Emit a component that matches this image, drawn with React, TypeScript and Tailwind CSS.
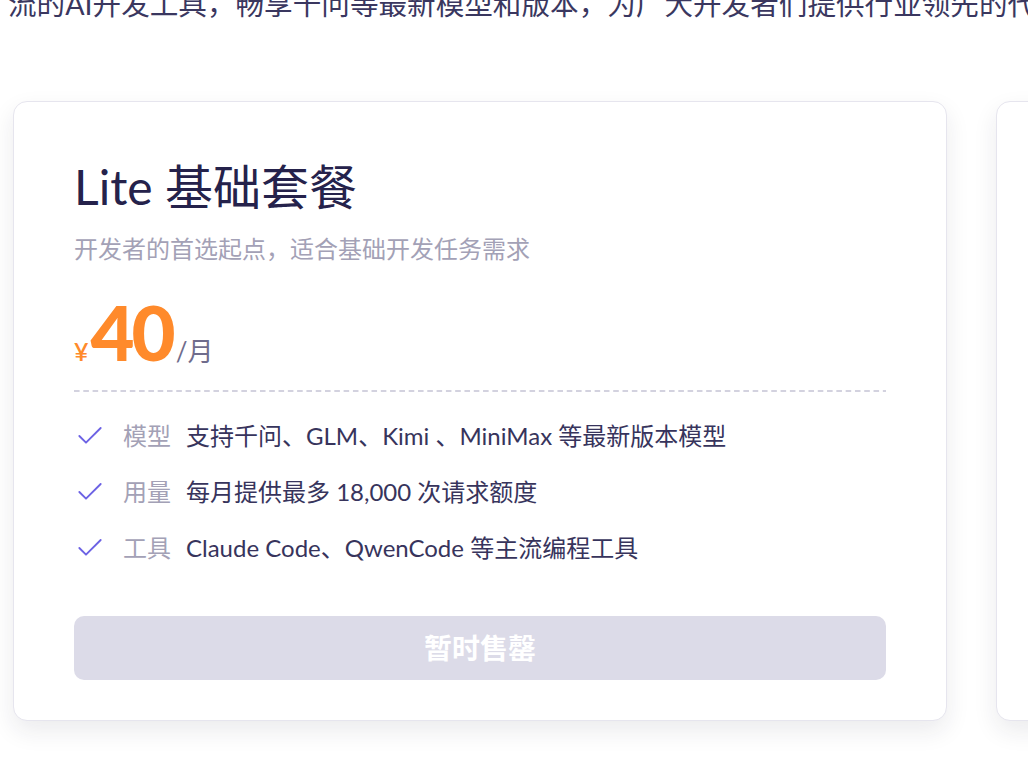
import { Check } from "lucide-react";

const features = [
  { label: "模型", text: "支持千问、GLM、Kimi 、MiniMax 等最新版本模型" },
  { label: "用量", text: "每月提供最多 18,000 次请求额度" },
  { label: "工具", text: "Claude Code、QwenCode 等主流编程工具" },
];

function PlanCard() {
  return (
    <div className="w-[934px] shrink-0 rounded-[14px] border border-[#e6e5ee] bg-white px-[60px] pt-[55px] pb-[39px] shadow-[0_10px_24px_rgba(30,30,60,0.09)]">
      <h2 className="text-[48px] leading-[60px] font-normal text-[#25224b]">Lite 基础套餐</h2>
      <p className="mt-4 text-[24px] leading-[32px] text-[#a3a1b6]">开发者的首选起点，适合基础开发任务需求</p>

      <div className="mt-[31px] flex items-baseline h-[72px]">
        <span className="text-[25px] font-semibold text-[#ff8a2b]">¥</span>
        <span className="ml-[2px] text-[76px] leading-[72px] font-black text-[#ff8a2b] tracking-[-3px]">40</span>
        <span className="text-[26px] text-[#6f6c8c] ml-[3px]">/月</span>
      </div>

      {/* dashed divider */}
      <div className="mt-[22px] h-[2px] w-full bg-[linear-gradient(to_right,#d3d2df_6px,transparent_6px)] bg-[length:9.3px_2px]" />

      <ul className="mt-[28px] flex flex-col gap-6">
        {features.map(f => (
          <li key={f.label} className="flex items-center h-[32px]">
            <Check size={32} strokeWidth={1.4} className="text-[#6c62e4] shrink-0" />
            <span className="ml-[17px] text-[24px] text-[#a3a1b6]">{f.label}</span>
            <span className="ml-[15px] text-[24px] text-[#37345c]">{f.text}</span>
          </li>
        ))}
      </ul>

      <button
        disabled
        className="mt-[52px] w-full h-[64px] rounded-[10px] bg-[#dcdbe8] text-white text-[28px] font-bold"
      >
        暂时售罄
      </button>
    </div>
  );
}

export default function App() {
  return (
    <div className="w-[1028px] h-[764px] overflow-hidden bg-white font-['Lato','Noto_Sans_CJK_SC',sans-serif]">
      <p className="-mt-[16px] pl-[8px] whitespace-nowrap text-[28.6px] leading-[40px] text-[#3a375f]">
        流的AI开发工具，畅享千问等最新模型和版本，为广大开发者们提供行业领先的代码开发体验
      </p>

      <div className="mt-[77px] flex gap-[49px] pl-[13px]">
        <PlanCard />
        <div className="w-[934px] h-[620px] shrink-0 rounded-[14px] border border-[#e6e5ee] bg-white shadow-[0_10px_24px_rgba(30,30,60,0.09)]" />
      </div>
    </div>
  );
}
